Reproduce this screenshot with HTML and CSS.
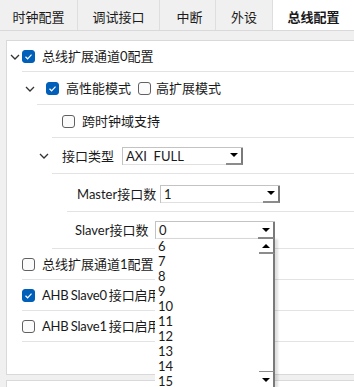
FILE: index.html
```html
<!DOCTYPE html>
<html lang="zh-CN">
<head>
  <meta charset="UTF-8" />
  <title>总线配置</title>
  <link rel="stylesheet" href="styles.css">
</head>
<body>
  <div class="tabs">
    <div class="tab t1">时钟配置</div>
    <div class="tab t2">调试接口</div>
    <div class="tab t3">中断</div>
    <div class="tab t4">外设</div>
    <div class="tab t5 active">总线配置</div>
  </div>

  <div class="panel">
    <!-- 通道0 -->
    <div class="row lv0">
      <span class="arrow"><svg width="10" height="6" viewBox="0 0 10 6"><polyline points="1,1 5,5 9,1" /></svg></span>
      <div class="cell h31">
        <span class="chk on"><svg width="13" height="13" viewBox="0 0 13 13"><polyline points="3.5,6.8 5.6,8.8 9.5,4.6" /></svg></span>
        <span class="txt">总线扩展通道0配置</span>
      </div>
    </div>

    <div class="row lv1">
      <span class="arrow"><svg width="10" height="6" viewBox="0 0 10 6"><polyline points="1,1 5,5 9,1" /></svg></span>
      <div class="cell h33 pad9">
        <span class="chk on"><svg width="13" height="13" viewBox="0 0 13 13"><polyline points="3.5,6.8 5.6,8.8 9.5,4.6" /></svg></span>
        <span class="txt">高性能模式</span>
        <span class="chk second"></span>
        <span class="txt">高扩展模式</span>
      </div>
    </div>

    <div class="row lv2">
      <span class="arrow"></span>
      <div class="cell h33 pad10">
        <span class="chk"></span>
        <span class="txt">跨时钟域支持</span>
      </div>
    </div>

    <div class="row lv2">
      <span class="arrow left"><svg width="10" height="6" viewBox="0 0 10 6"><polyline points="1,1 5,5 9,1" /></svg></span>
      <div class="cell h36 pad10">
        <span class="txt">接口类型</span>
        <div class="select w121 gap8">
          <span class="val">AXI&nbsp; FULL</span>
          <span class="btn"><i class="down"></i></span>
        </div>
      </div>
    </div>

    <div class="row lv3">
      <span class="arrow"></span>
      <div class="cell h38 pad10">
        <span class="txt lbl">Master接口数</span>
        <div class="select w120 gap5">
          <span class="val">1</span>
          <span class="btn"><i class="down"></i></span>
        </div>
      </div>
    </div>

    <div class="row lv2">
      <span class="arrow"></span>
      <div class="cell h37 pad23">
        <span class="txt lbl">Slaver接口数</span>
        <div class="select w120 gap2 open">
          <span class="val">0</span>
          <span class="btn"><i class="down"></i></span>
          <div class="list">
            <ul class="items">
              <li>6</li>
              <li>7</li>
              <li>8</li>
              <li>9</li>
              <li>10</li>
              <li>11</li>
              <li>12</li>
              <li>13</li>
              <li>14</li>
              <li>15</li>
            </ul>
            <div class="scroll">
              <span class="sbtn"><i class="up"></i></span>
              <span class="track"></span>
              <span class="sbtn bottom"><i class="down"></i></span>
            </div>
          </div>
        </div>
      </div>
    </div>

    <!-- 通道1 / AHB -->
    <div class="row lv0">
      <span class="arrow"></span>
      <div class="cell h31">
        <span class="chk"></span>
        <span class="txt">总线扩展通道1配置</span>
      </div>
    </div>

    <div class="row lv0">
      <span class="arrow"></span>
      <div class="cell h31">
        <span class="chk on"><svg width="13" height="13" viewBox="0 0 13 13"><polyline points="3.5,6.8 5.6,8.8 9.5,4.6" /></svg></span>
        <span class="txt ahb">AHB Slave0 接口启用</span>
      </div>
    </div>

    <div class="row lv0">
      <span class="arrow"></span>
      <div class="cell h31">
        <span class="chk"></span>
        <span class="txt ahb">AHB Slave1 接口启用</span>
      </div>
    </div>
  </div>

  <div class="panel next"></div>
</body>
</html>
```

FILE: styles.css
```css
body {
  margin: 0;
  background-color: #f0f0f0;
  font-family: Lato, "Noto Sans CJK SC", sans-serif;
  font-size: 13px;
  color: #1a1a1a;
  overflow: hidden;
}

/* Pestañas */
.tabs {
  display: flex;
  height: 30px;
  border-bottom: 1px solid #d9d9d9;
  background-color: #f0f0f0;
}

.tab {
  display: flex;
  align-items: center;
  justify-content: center;
  font-family: "Noto Sans CJK SC", sans-serif;
  font-size: 13px;
  border-right: 1px solid #dedede;
  padding-top: 2px;
  box-sizing: border-box;
}

.t1 { width: 78px; }
.t2 { width: 82px; }
.t3 { width: 56px; padding-left: 4px; }
.t4 { width: 57px; }
.t5 { flex: 1; }

.active {
  background-color: #fff;
  font-weight: bold;
  border-right: none;
}

/* Panel */
.panel {
  margin: 9px 0 0 6px;
  background-color: #fff;
  border-top: 1px solid #d9d9d9;
  border-left: 1px solid #d9d9d9;
  border-bottom: 1px solid #d9d9d9;
  padding-bottom: 32px;
}

.panel.next {
  margin-top: 5px;
  height: 40px;
  padding: 0;
}

.row {
  display: flex;
}

.lv1 { padding-left: 15px; }
.lv2 { padding-left: 30px; }
.lv3 { padding-left: 45px; }

.arrow {
  width: 15px;
  flex: none;
  display: flex;
  align-items: center;
  justify-content: center;
}

.arrow.left {
  justify-content: flex-start;
  padding-left: 2px;
  box-sizing: border-box;
}

.arrow polyline {
  fill: none;
  stroke: #333;
  stroke-width: 1.3;
}

.cell {
  flex: 1;
  display: flex;
  align-items: center;
  border-bottom: 1px solid #e3e3e3;
  box-sizing: border-box;
}

.h31 { height: 31px; }
.h33 { height: 33px; }
.h36 { height: 36px; }
.h38 { height: 38px; padding-top: 2px; }
.h37 { height: 37px; }

.pad9 { padding-left: 9px; }
.pad10 { padding-left: 10px; }
.pad23 { padding-left: 23px; }

.txt {
  line-height: 16px;
  white-space: nowrap;
}

.lbl {
  width: 78px;
}

.ahb {
  word-spacing: -1px;
  letter-spacing: -0.2px;
}

/* Checkbox */
.chk {
  width: 13px;
  height: 13px;
  flex: none;
  box-sizing: border-box;
  border: 1px solid #616161;
  border-radius: 3px;
  background-color: #fbfbfb;
  margin-right: 7px;
  display: flex;
}

.chk.on {
  background-color: #005fb8;
  border-color: #005fb8;
}

.chk svg {
  margin: -1px;
}

.chk polyline {
  fill: none;
  stroke: #fff;
  stroke-width: 1.2;
}

.chk.second {
  margin-left: 7px;
  margin-right: 5px;
}

/* Select */
.select {
  position: relative;
  display: flex;
  flex: none;
  height: 18px;
  box-sizing: border-box;
  border: 1px solid #c3c3c3;
  border-right: none;
  border-bottom: none;
  background-color: #fff;
}

.w121 { width: 121px; }
.w120 { width: 120px; }
.gap8 { margin-left: 8px; }
.gap5 { margin-left: 5px; }
.gap2 { margin-left: 2px; }

.val {
  flex: 1;
  padding-left: 3px;
  line-height: 17px;
  border-bottom: 1px solid #e0e0e0;
}

.btn {
  width: 17px;
  box-sizing: border-box;
  border-right: 2px solid #7a7a7a;
  border-bottom: 2px solid #8c8c8c;
  display: flex;
  align-items: center;
  justify-content: center;
}

.down, .up {
  width: 0;
  height: 0;
  border-left: 4px solid transparent;
  border-right: 4px solid transparent;
}

.down { border-top: 4px solid #000; }
.up { border-bottom: 4px solid #000; }

/* Lista desplegada */
.list {
  position: absolute;
  top: 17px;
  left: -1px;
  width: 120px;
  height: 149px;
  background-color: #fff;
  display: flex;
  box-shadow: 3px 0 2px rgba(0, 0, 0, 0.12);
  z-index: 5;
}

.items {
  flex: 1;
  list-style: none;
  margin: 0;
  padding: 0;
}

.items li {
  height: 15px;
  line-height: 15px;
  padding-left: 3px;
}

.scroll {
  width: 16px;
  display: flex;
  flex-direction: column;
}

.sbtn {
  height: 15px;
  box-sizing: border-box;
  border-right: 2px solid #7a7a7a;
  border-bottom: 2px solid #8c8c8c;
  display: flex;
  align-items: center;
  justify-content: center;
  background-color: #fff;
}

.sbtn.bottom {
  height: 17px;
  border-top: 1px solid #8c8c8c;
  border-bottom: none;
}

.track {
  flex: 1;
  border-right: 2px solid #7a7a7a;
}
```
